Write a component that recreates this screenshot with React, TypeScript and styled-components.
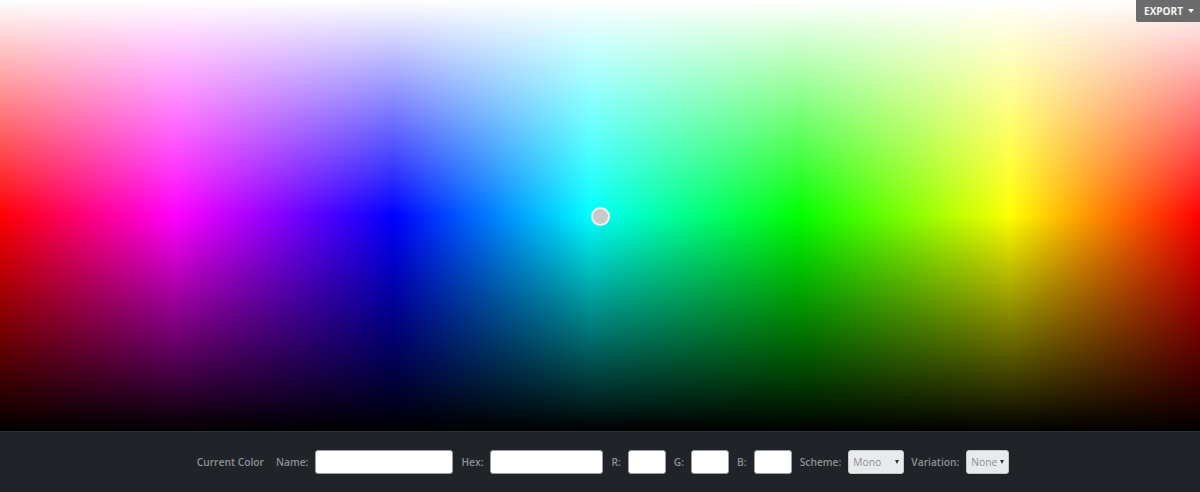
import React from "react";
import styled, { createGlobalStyle } from "styled-components";

const Global = createGlobalStyle`
  html, body { margin: 0; padding: 0; background: #202429; }
  body { font-family: "Open Sans", "Liberation Sans", sans-serif; overflow: hidden; }
  * { box-sizing: border-box; }
`;

const Page = styled.div`
  width: 1200px;
  height: 492px;
  display: flex;
  flex-direction: column;
`;

const Picker = styled.div`
  position: relative;
  height: 431px;
  flex: none;
  background:
    linear-gradient(to bottom, #fff 0%, rgba(255,255,255,0) 50%, rgba(0,0,0,0) 50%, #000 100%),
    linear-gradient(to right, #f00 0%, #f0f 14.7%, #00f 32.8%, #0ff 49.2%, #0f0 66.7%, #ff0 84.2%, #f00 100%);
`;

const Handle = styled.div`
  position: absolute;
  left: 591px;
  top: 207px;
  width: 19px;
  height: 19px;
  border-radius: 50%;
  background: #c9c9c9;
  border: 2px solid #f2f2f2;
`;

const ExportButton = styled.button`
  position: absolute;
  top: 0;
  right: 0;
  width: 64px;
  height: 22px;
  border: none;
  border-radius: 0 0 0 2px;
  background: #6b6b6b;
  color: #f4f4f4;
  font-family: "Open Sans", sans-serif;
  font-weight: 700;
  font-size: 10px;
  display: flex;
  align-items: center;
  justify-content: center;
  gap: 5px;
  padding: 0 0 0 2px;
`;

const Caret = styled.span`
  width: 0;
  height: 0;
  border-left: 3px solid transparent;
  border-right: 3px solid transparent;
  border-top: 4px solid #f4f4f4;
`;

const Bar = styled.div`
  flex: 1;
  background: #202429;
  border-top: 1px solid #2b3036;
  display: flex;
  align-items: center;
  justify-content: center;
  gap: 7px;
  padding: 0 0 0 6px;
`;

const Label = styled.span<{ $gapAfter?: number }>`
  color: #8b9096;
  font-size: 10.25px;
  font-weight: 600;
  margin-right: ${(p) => p.$gapAfter ?? 0}px;
`;

const Field = styled.input<{ $w: number }>`
  width: ${(p) => p.$w}px;
  height: 24px;
  border: 1px solid #9a9ea3;
  border-radius: 3px;
  background: #fff;
  margin-right: 1px;
`;

const SelectBox = styled.div<{ $w: number }>`
  width: ${(p) => p.$w}px;
  height: 24px;
  border-radius: 3px;
  background: #e9eaec;
  border: 1px solid #c4c7ca;
  display: flex;
  align-items: center;
  justify-content: space-between;
  padding: 0 4px 0 4px;
  color: #8b8f94;
  font-size: 10.25px;
`;

const SmallCaret = styled.span`
  width: 0;
  height: 0;
  border-left: 2.5px solid transparent;
  border-right: 2.5px solid transparent;
  border-top: 4px solid #333;
`;

export default function App() {
  return (
    <Page>
      <Global />
      <Picker>
        <Handle />
        <ExportButton>
          EXPORT <Caret />
        </ExportButton>
      </Picker>
      <Bar>
        <Label $gapAfter={5}>Current Color</Label>
        <Label>Name:</Label>
        <Field $w={138} />
        <Label>Hex:</Label>
        <Field $w={113} />
        <Label>R:</Label>
        <Field $w={38} />
        <Label>G:</Label>
        <Field $w={38} />
        <Label>B:</Label>
        <Field $w={38} />
        <Label>Scheme:</Label>
        <SelectBox $w={56}>
          Mono <SmallCaret />
        </SelectBox>
        <Label>Variation:</Label>
        <SelectBox $w={43}>
          None <SmallCaret />
        </SelectBox>
      </Bar>
    </Page>
  );
}
